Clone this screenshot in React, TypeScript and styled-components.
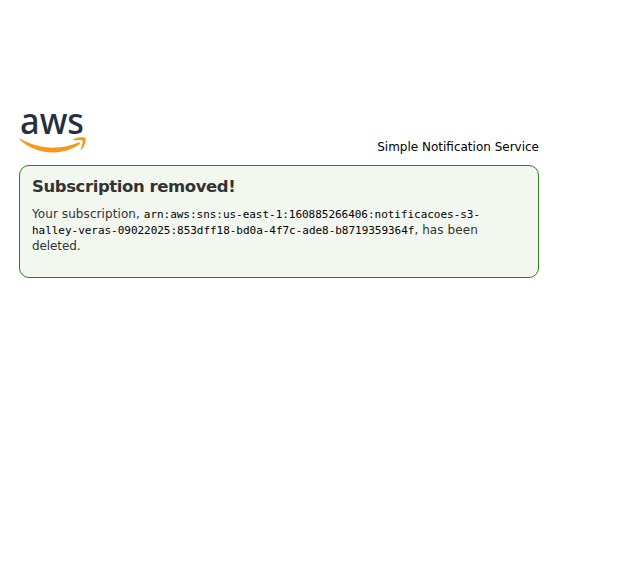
import React from "react";
import styled, { createGlobalStyle } from "styled-components";

const GlobalStyle = createGlobalStyle`
  body {
    margin: 0;
    background: #fff;
    font-family: "DejaVu Sans", Verdana, sans-serif;
    font-size: 12px;
    color: #333;
  }
`;

const Page = styled.main`
  box-sizing: border-box;
  width: 520px;
  margin-left: 19px;
  padding-top: 112px;
`;

const Header = styled.header`
  display: flex;
  justify-content: space-between;
  align-items: flex-end;
  height: 43px;
  margin-bottom: 10px;
`;

const Logo = styled.svg`
  display: block;
  align-self: flex-start;
  width: 67px;
  height: 42px;
  overflow: visible;
`;

const Wordmark = styled.text`
  font-family: "Noto Sans", sans-serif;
  font-size: 36px;
  font-weight: 500;
  fill: #252f3e;
`;

const ServiceName = styled.span`
  color: #000;
  line-height: 16px;
  white-space: nowrap;
`;

const Notice = styled.section`
  box-sizing: border-box;
  height: 113px;
  padding: 11px 12px 9px;
  border: 1px solid #2a8217;
  border-radius: 10px;
  background: #f2f7f0;
`;

const Title = styled.h1`
  margin: 0;
  font-size: 16.5px;
  line-height: 20px;
  letter-spacing: -0.42px;
  white-space: nowrap;
`;

const Message = styled.p`
  margin: 9px 0 0;
  line-height: 16px;
  letter-spacing: 0.08px;
`;

const Arn = styled.code`
  font-family: "DejaVu Sans Mono", monospace;
  font-size: 11px;
  line-height: 1;
  letter-spacing: -0.03px;
  color: #000;
`;

const Closing = styled.span`
  letter-spacing: -0.1px;
`;

export default function App() {
  return (
    <>
      <GlobalStyle />
      <Page>
        <Header>
          <Logo viewBox="0 0 67 42" role="img" aria-label="AWS">
            <Wordmark x="1" y="22" textLength="64" lengthAdjust="spacingAndGlyphs">
              aws
            </Wordmark>
            <g transform="scale(0.221 0.2237)" fill="#f6981d">
              <path d="M273.5,143.7c-32.9,24.3-80.7,37.2-121.8,37.2c-57.6,0-109.5-21.3-148.7-56.7c-3.1-2.8-0.3-6.6,3.4-4.4c42.4,24.6,94.7,39.5,148.8,39.5c36.5,0,76.6-7.6,113.5-23.2C274.2,133.6,278.9,139.7,273.5,143.7z" />
              <path d="M287.2,128.1c-4.2-5.4-27.8-2.6-38.5-1.3c-3.2,0.4-3.7-2.4-0.8-4.5c18.8-13.2,49.7-9.4,53.3-5c3.6,4.5-1,35.4-18.6,50.2c-2.7,2.3-5.3,1.1-4.1-1.9C282.5,155.7,291.4,133.4,287.2,128.1z" />
            </g>
          </Logo>
          <ServiceName>Simple Notification Service</ServiceName>
        </Header>
        <Notice>
          <Title>Subscription removed!</Title>
          <Message>
            Your subscription,{" "}
            <Arn>
              arn:aws:sns:us-east-1:160885266406:notificacoes-s3-
              <br />
              halley-veras-09022025:853dff18-bd0a-4f7c-ade8-b8719359364f
            </Arn>
            , has been
            <br />
            <Closing>deleted.</Closing>
          </Message>
        </Notice>
      </Page>
    </>
  );
}
